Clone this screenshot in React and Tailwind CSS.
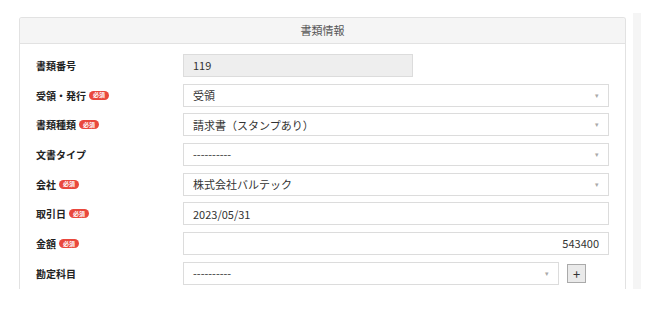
import React from "react";

// Badge "必須" (obligatoire)
const Required = () => (
  <span className="ml-[3px] inline-flex h-[9px] items-center rounded-full bg-[#e9483d] px-[4px] text-[6px] font-bold leading-none text-white">
    必須
  </span>
);

// Petite flèche des listes déroulantes
const Arrow = () => (
  <span className="text-[7px] leading-none text-[#aaa]">▾</span>
);

const rows = [
  { label: "書類番号", kind: "readonly", value: "119" },
  { label: "受領・発行", req: true, kind: "select", value: "受領" },
  { label: "書類種類", req: true, kind: "select", value: "請求書（スタンプあり）" },
  { label: "文書タイプ", kind: "select", value: "----------" },
  { label: "会社", req: true, kind: "select", value: "株式会社バルテック" },
  { label: "取引日", req: true, kind: "input", value: "2023/05/31" },
  { label: "金額", req: true, kind: "amount", value: "543400" },
  { label: "勘定科目", kind: "selectPlus", value: "----------" },
];

const Field = ({ row }) => {
  const base =
    "flex h-[23px] items-center border border-[#dcdcdc] px-[9px] text-[11px] text-[#333]";
  if (row.kind === "readonly") {
    return <div className={`${base} w-[230px] bg-[#eeeeee]`}>{row.value}</div>;
  }
  if (row.kind === "input") {
    return <div className={`${base} flex-1 bg-white`}>{row.value}</div>;
  }
  if (row.kind === "amount") {
    return (
      <div className={`${base} flex-1 justify-end bg-white`}>{row.value}</div>
    );
  }
  if (row.kind === "selectPlus") {
    return (
      <div className="flex flex-1 items-center">
        <div className={`${base} w-[376px] justify-between bg-white`}>
          <span>{row.value}</span>
          <Arrow />
        </div>
        <button className="ml-[8px] flex h-[19px] w-[19px] items-center justify-center border border-[#aaa] bg-[#eaeaea] text-[13px] leading-none text-[#333]">
          +
        </button>
      </div>
    );
  }
  return (
    <div className={`${base} flex-1 justify-between bg-white`}>
      <span>{row.value}</span>
      <Arrow />
    </div>
  );
};

const App = () => {
  return (
    <div
      className="h-[328px] w-[647px] overflow-hidden bg-white"
      style={{ fontFamily: '"Noto Sans CJK JP", "Noto Sans", sans-serif' }}
    >
      <div className="flex pl-[19px] pt-[13px]">
        {/* Carte principale */}
        <div className="mt-[4px] h-[272px] w-[607px] overflow-hidden rounded-t-[3px] border-x border-t border-[#e2e2e2]">
          <div className="flex h-[26px] items-center justify-center border-b border-[#e2e2e2] bg-[#f5f5f5] text-[11px] text-[#555]">
            書類情報
          </div>
          <div className="flex flex-col gap-[6.7px] pl-[16px] pr-[16px] pt-[10px]">
            {rows.map((row) => (
              <div key={row.label} className="flex h-[23px] items-center">
                <div className="flex w-[147px] items-center text-[10px] font-bold text-[#222]">
                  {row.label}
                  {row.req && <Required />}
                </div>
                <Field row={row} />
              </div>
            ))}
          </div>
        </div>
        {/* Barre latérale */}
        <div className="ml-[7px] h-[276px] w-[8px] bg-[#f5f5f5]" />
      </div>
    </div>
  );
};

export default App;
